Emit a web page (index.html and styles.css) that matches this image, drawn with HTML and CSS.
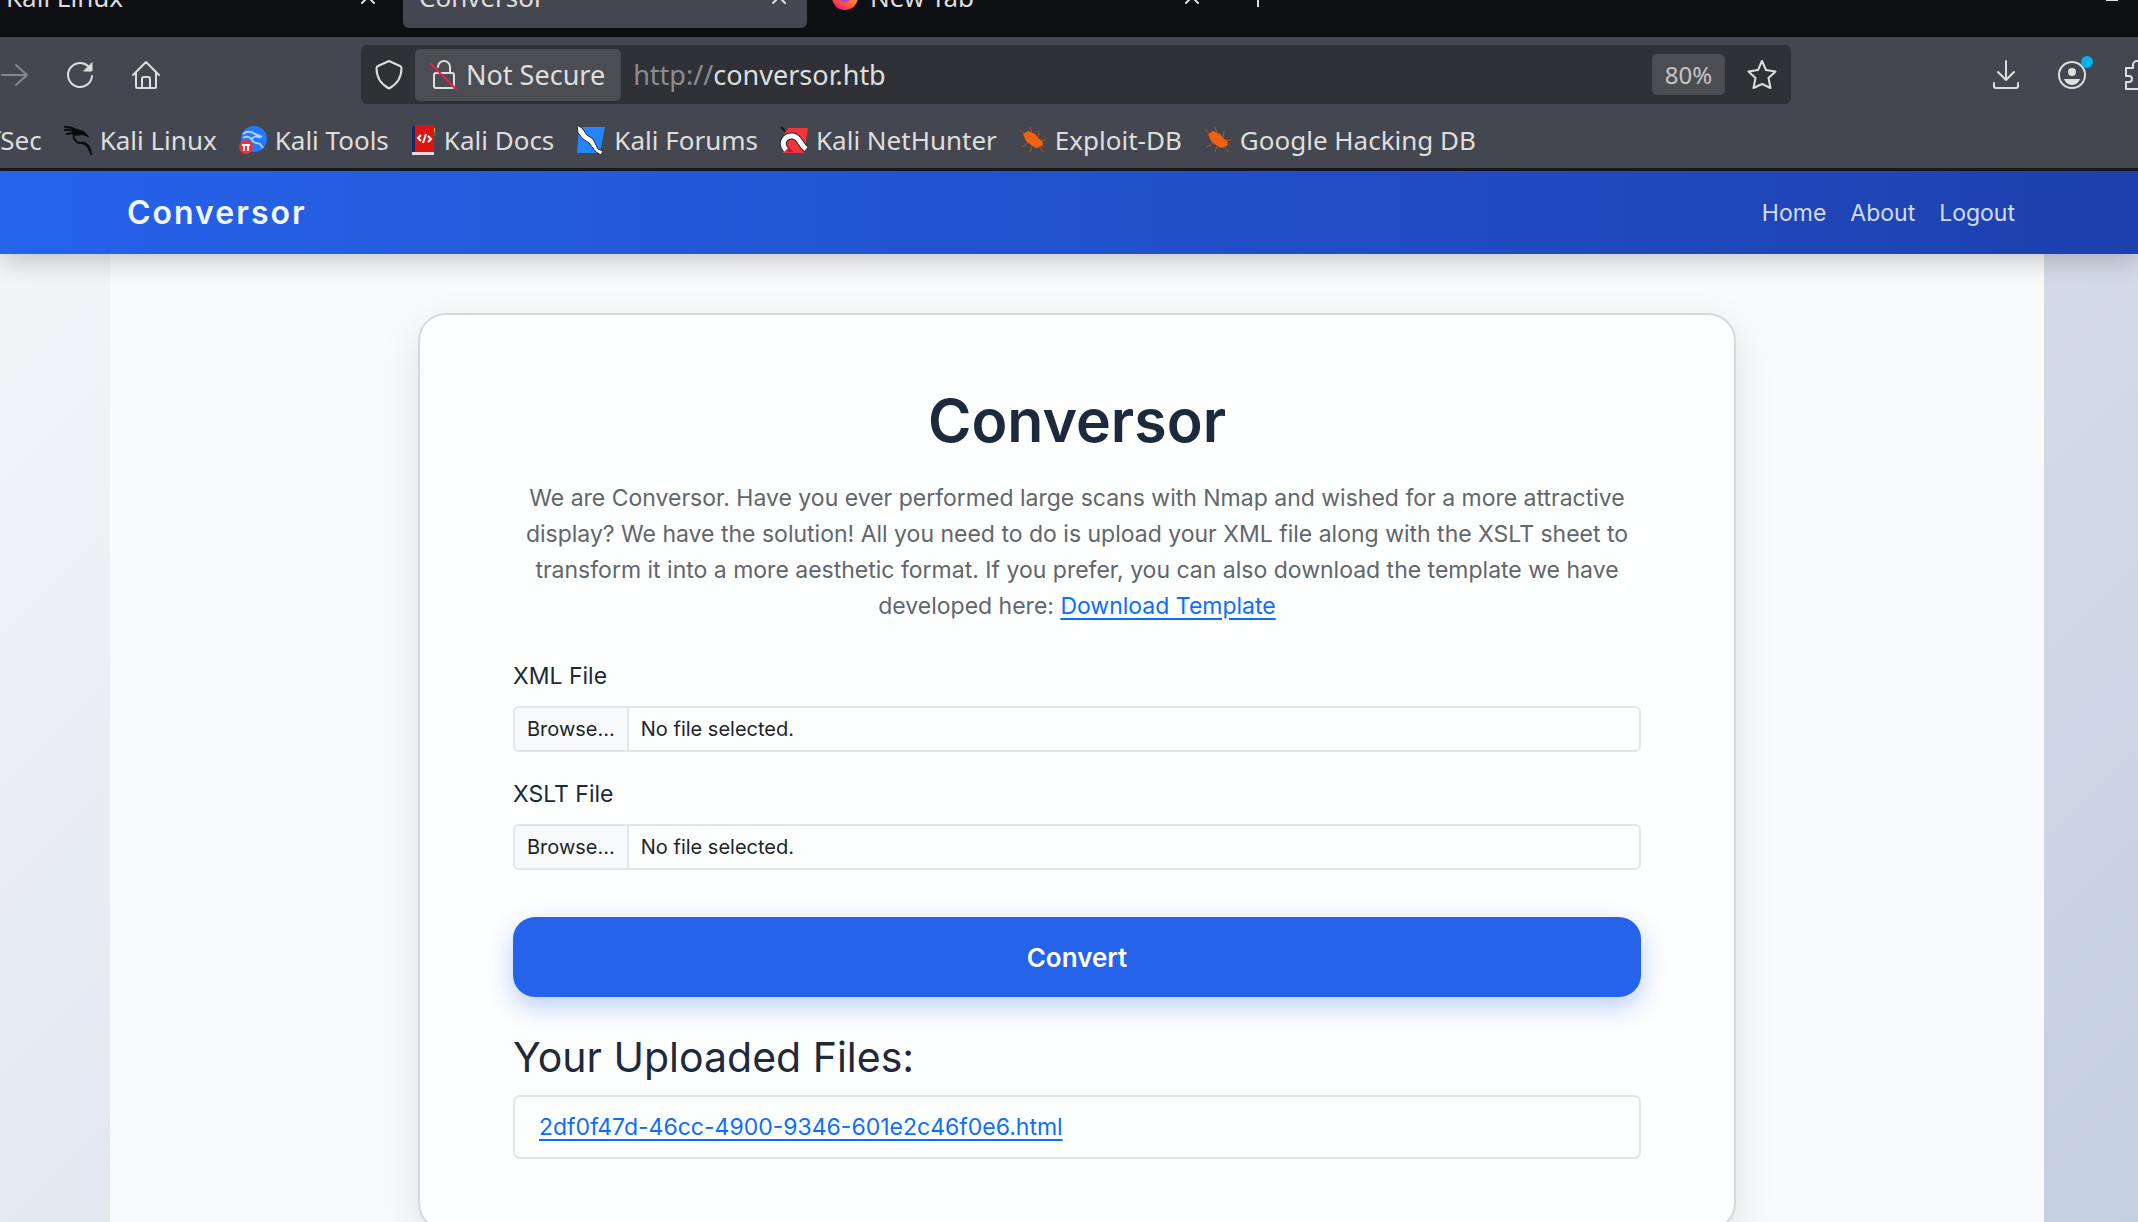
FILE: index.html
```
<!DOCTYPE html>
<html lang="en">
<head>
  <meta charset="UTF-8">
  <meta name="viewport" content="width=device-width, initial-scale=1.0">
  <title>Conversor</title>
  <link rel="stylesheet" href="styles.css">
</head>
<body>

  <!-- browser window -->
  <div class="browser">
    <div class="tabs">
      <div class="tab">
        <span>Kali Linux</span>
        <button class="tab-close" aria-label="Close tab"><svg width="16" height="16" viewBox="0 0 16 16"><path d="M2 2l12 12M14 2L2 14"/></svg></button>
      </div>
      <div class="tab active">
        <span>Conversor</span>
        <button class="tab-close" aria-label="Close tab"><svg width="16" height="16" viewBox="0 0 16 16"><path d="M2 2l12 12M14 2L2 14"/></svg></button>
      </div>
      <div class="tab">
        <svg class="tab-icon" width="26" height="26" viewBox="0 0 26 26">
          <defs>
            <linearGradient id="fox" x1="0.8" y1="0" x2="0.2" y2="1">
              <stop offset="0" stop-color="#ffd23e"/>
              <stop offset="0.55" stop-color="#ff6a3a"/>
              <stop offset="1" stop-color="#f5156c"/>
            </linearGradient>
          </defs>
          <circle cx="13" cy="13" r="13" fill="url(#fox)"/>
          <circle cx="13" cy="12" r="6" fill="#8a4be0"/>
        </svg>
        <span>New Tab</span>
        <button class="tab-close" aria-label="Close tab"><svg width="16" height="16" viewBox="0 0 16 16"><path d="M2 2l12 12M14 2L2 14"/></svg></button>
      </div>
      <button class="new-tab" aria-label="New tab"><svg width="20" height="20" viewBox="0 0 20 20"><path d="M10 0v20M0 10h20"/></svg></button>
      <div class="window-buttons">
        <button aria-label="List all tabs"><svg width="16" height="10" viewBox="0 0 16 10"><path d="M1 0l7 7 7-7"/></svg></button>
        <button aria-label="Minimize"><svg width="12" height="12" viewBox="0 0 12 12"><path d="M0 8h12" stroke-width="4"/></svg></button>
      </div>
    </div>

    <div class="toolbar">
      <button class="forward" aria-label="Forward"><svg width="28" height="28" viewBox="0 0 28 28"><path d="M2 14h25M16 4l11 10-11 10"/></svg></button>
      <button aria-label="Reload"><svg width="28" height="28" viewBox="0 0 28 28"><path d="M22 5A12 12 0 1 0 26 15"/><path d="M26 2v8h-8z" fill="currentColor" stroke-width="1"/></svg></button>
      <button aria-label="Home"><svg width="28" height="30" viewBox="0 0 28 30"><path d="M1 15L14 2l13 13M4 12v15a1 1 0 0 0 1 1h18a1 1 0 0 0 1-1V12M10 28v-9a2 2 0 0 1 2-2h4a2 2 0 0 1 2 2v9"/></svg></button>

      <div class="urlbar">
        <button class="shield" aria-label="Tracking protection"><svg width="28" height="30" viewBox="0 0 28 30"><path d="M14 1l11 5c1 .5 1.500 1 1.500 2 0 9-4 16-12.500 20.500C5.500 24 1.500 17 1.500 8c0-1 .5-1.500 1.500-2z"/></svg></button>
        <button class="not-secure">
          <svg width="28" height="32" viewBox="0 0 28 32"><rect x="4" y="14" width="20" height="15" rx="2"/><path d="M8 8a6 6 0 0 1 12 0v6"/><path d="M1 5l25 25" stroke="#d7264c"/></svg>
          Not Secure
        </button>
        <div class="url"><span>http://</span>conversor.htb</div>
        <button class="zoom">80%</button>
        <button class="star" aria-label="Bookmark this page"><svg width="30" height="30" viewBox="0 0 30 30"><path d="M15 1l4 9 9.500 1.500-7 6.500 2 10L15 24l-8.500 4 2-10-7-6.500L11 10z"/></svg></button>
      </div>

      <div class="toolbar-right">
        <button aria-label="Downloads"><svg width="28" height="30" viewBox="0 0 28 30"><path d="M14 1v19M6 12l8 8 8-8M2 23v3a2 2 0 0 0 2 2h20a2 2 0 0 0 2-2v-3"/></svg></button>
        <button class="account" aria-label="Account"><svg width="30" height="30" viewBox="0 0 30 30"><circle cx="15" cy="15" r="13"/><circle cx="15" cy="12" r="4" fill="currentColor" stroke="none"/><path d="M7 19h16c-1 3-4 6-8 6s-7-3-8-6z" fill="currentColor" stroke="none"/></svg></button>
        <button aria-label="Extensions"><svg width="30" height="32" viewBox="0 0 30 32"><path d="M2 9h7V6a4 4 0 0 1 8 0v3h7v21H2v-7h3a3 3 0 0 0 0-6H2z"/></svg></button>
      </div>
    </div>

    <nav class="bookmarks">
      <a href="#">OffSec</a>
      <a href="#">
        <svg width="28" height="30" viewBox="0 0 28 30"><g fill="none" stroke="#0b0b0d" stroke-linecap="round"><path d="M1 2c4 0 8 0 11 4M1 5c4-1 7 0 10 2M3 9c3-1 5-1 8-1" stroke-width="2"/><path d="M11 6c-3 5-1 12 6 12 6 0 9 3 10 11" stroke-width="2"/></g><path d="M9 2c4 3 8 2 12 5l5 6-7-3-8 1c-4-2-4-6-2-9zM16 17c5-1 9 2 10 6l1 6-5-8z" fill="#0b0b0d"/></svg>
        Kali Linux
      </a>
      <a href="#">
        <svg width="28" height="30" viewBox="0 0 28 30"><circle cx="15" cy="14" r="13" fill="#2777ff"/><path d="M4 9c5-4 9-2 12 0l7 3M4 13c5-3 8 0 9 2 1 3 5 3 8 4l3 4M13 14c1-3 5-3 8-1" fill="none" stroke="#a9d2ff" stroke-width="2"/><circle cx="7" cy="22" r="7" fill="#ee3338"/><path d="M3 20h8M5 20v6M9 20v6" stroke="#fff" stroke-width="2"/></svg>
        Kali Tools
      </a>
      <a href="#">
        <svg width="25" height="30" viewBox="0 0 25 30"><path d="M1 1h3v27H1z" fill="#17295e"/><path d="M4 0h19v27H4z" fill="#dc1414"/><path d="M23 3h1v4h-1z" fill="#e69b26"/><path d="M23 7h1v4h-1z" fill="#3d8a4c"/><path d="M1 27h22v3H1z" fill="#e4dcdc"/><path d="M10 10l-3 3 3 3M17 11l3 3-3 3M15 9l-3 9" fill="none" stroke="#fff" stroke-width="2"/></svg>
        Kali Docs
      </a>
      <a href="#">
        <svg width="30" height="32" viewBox="0 0 30 32"><path d="M3 3h26l-5 26H1z" fill="#2385ff"/><path d="M1 1l5 3 5 7 6 4 5 10 5 2-2 4-5-3-7-9-6-4-5-6z" fill="#fff" stroke="#26262b" stroke-width="1"/></svg>
        Kali Forums
      </a>
      <a href="#">
        <svg width="28" height="30" viewBox="0 0 28 30"><path d="M8 3h20l-4 25H3L1 15z" fill="#f4343b"/><path d="M1 2l4 4" stroke="#111" stroke-width="2"/><path d="M6 25c-6-7-1-15 7-14 7 1 7 9 13 13" fill="none" stroke="#26262b" stroke-width="7"/><path d="M6 25c-6-7-1-15 7-14 7 1 7 9 13 13" fill="none" stroke="#fff" stroke-width="5"/><path d="M7 27l2-6 4 6z" fill="#c01546"/></svg>
        Kali NetHunter
      </a>
      <a href="#">
        <svg width="28" height="30" viewBox="0 0 28 30"><path d="M4 9l5-3 7 3 4 5 3 1 1 5-3 2-4 1-5-3-5-4z" fill="#f0620f"/><path d="M1 5l5 4M11 2l2 6M20 6l-1 7M27 15l-6 1M3 22l6-4M11 27l2-6M24 27l-4-6" stroke="#b85420" stroke-width="1"/></svg>
        Exploit-DB
      </a>
      <a href="#">
        <svg width="28" height="30" viewBox="0 0 28 30"><path d="M4 9l5-3 7 3 4 5 3 1 1 5-3 2-4 1-5-3-5-4z" fill="#f0620f"/><path d="M1 5l5 4M11 2l2 6M20 6l-1 7M27 15l-6 1M3 22l6-4M11 27l2-6M24 27l-4-6" stroke="#b85420" stroke-width="1"/></svg>
        Google Hacking DB
      </a>
    </nav>
  </div>

  <!-- page -->
  <div class="page">
    <header class="navbar">
      <div class="navbar-inner">
        <a class="brand" href="#">Conversor</a>
        <nav class="nav-links">
          <a href="#">Home</a>
          <a href="#">About</a>
          <a href="#">Logout</a>
        </nav>
      </div>
    </header>

    <main class="container">
      <div class="card">
        <h1>Conversor</h1>
        <p class="intro">We are Conversor. Have you ever performed large scans with Nmap and wished for a more attractive display? We have the solution! All you need to do is upload your XML file along with the XSLT sheet to transform it into a more aesthetic format. If you prefer, you can also download the template we have developed here: <a href="#">Download Template</a></p>

        <form>
          <div class="field">
            <label for="xml_file">XML File</label>
            <div class="file-control">
              <span class="file-browse">Browse...</span>
              <span class="file-name">No file selected.</span>
              <input type="file" id="xml_file" name="xml_file">
            </div>
          </div>
          <div class="field">
            <label for="xslt_file">XSLT File</label>
            <div class="file-control">
              <span class="file-browse">Browse...</span>
              <span class="file-name">No file selected.</span>
              <input type="file" id="xslt_file" name="xslt_file">
            </div>
          </div>
          <button class="convert" type="submit">Convert</button>
        </form>

        <h2>Your Uploaded Files:</h2>
        <ul class="files">
          <li><a href="#">2df0f47d-46cc-4900-9346-601e2c46f0e6.html</a></li>
        </ul>
      </div>
    </main>
  </div>

</body>
</html>
```
FILE: styles.css
```
:root {
  --chrome: #44474f;
  --chrome-dark: #0e0f13;
  --chrome-text: #dedede;
  --text: #1e293b;
  --primary: #2563eb;
  --link: #0d6efd;
  --border: #e2e5e9;
}

* {
  box-sizing: border-box;
}

body {
  margin: 0;
  height: 100vh;
  display: flex;
  flex-direction: column;
  overflow: hidden;
  font-family: Inter, "Liberation Sans", sans-serif;
  font-size: 23px;
  color: var(--text);
}

button {
  font: inherit;
  color: inherit;
  background: none;
  border: none;
  padding: 0;
  cursor: pointer;
}

/* browser */
.browser {
  flex: none;
  background: var(--chrome);
  color: var(--chrome-text);
  font-family: "Noto Sans", sans-serif;
  font-size: 26px;
  border-bottom: 3px solid #17181c;
}

.browser svg {
  display: block;
  flex: none;
}

.browser button svg {
  fill: none;
  stroke: currentColor;
  stroke-width: 2;
  stroke-linecap: round;
  stroke-linejoin: round;
}

.tabs {
  display: flex;
  align-items: flex-end;
  height: 37px;
  padding-bottom: 9px;
  overflow: hidden;
  background: var(--chrome-dark);
}

.tab {
  flex: none;
  display: flex;
  align-items: center;
  gap: 12px;
  width: 404px;
  height: 62px;
  padding: 0 20px 0 16px;
  border-radius: 6px;
}

.tab:first-child {
  width: 396px;
  margin-right: 7px;
  padding-left: 6px;
}

.tab.active {
  background: var(--chrome);
  margin-right: 9px;
}

.tab-close {
  margin-left: auto;
}

.new-tab {
  height: 62px;
  margin-left: 28px;
}

.window-buttons {
  display: flex;
  align-items: center;
  gap: 124px;
  height: 62px;
  margin-left: auto;
  padding-right: 20px;
}

.toolbar {
  display: flex;
  align-items: center;
  gap: 38px;
  height: 75px;
}

.toolbar .forward {
  color: #85878c;
}

.urlbar {
  display: flex;
  align-items: center;
  flex: 1;
  height: 59px;
  margin-left: 163px;
  padding: 0 14px;
  border-radius: 6px;
  background: #303136;
  font-size: 27px;
}

.not-secure {
  display: flex;
  align-items: center;
  gap: 8px;
  height: 52px;
  margin-left: 12px;
  padding: 0 16px 0 15px;
  border-radius: 5px;
  background: #4c4d52;
}

.url {
  flex: 1;
  margin-left: 12px;
}

.url span {
  color: #8b8c90;
}

.zoom {
  height: 41px;
  width: 73px;
  margin-right: 22px;
  border-radius: 5px;
  font-size: 24px;
  line-height: 41px;
  color: #c6c6c8;
  background: #4c4d52;
}

.toolbar-right {
  display: flex;
  align-items: center;
  gap: 37px;
  width: 325px;
  justify-content: flex-end;
  margin-right: -16px;
}

.account {
  position: relative;
}

.account::after {
  content: "";
  position: absolute;
  top: -4px;
  right: -6px;
  width: 12px;
  height: 12px;
  border-radius: 50%;
  background: #00b3f4;
}

.bookmarks {
  display: flex;
  align-items: center;
  gap: 22px;
  height: 56px;
  margin-left: -38px;
}

.bookmarks a {
  display: flex;
  align-items: center;
  gap: 8px;
  color: inherit;
  text-decoration: none;
  white-space: nowrap;
}

/* page */
.page {
  flex: 1;
  min-height: 0;
  display: flex;
  flex-direction: column;
  overflow: hidden;
  background: linear-gradient(135deg, #f4f6f9, #c4cfe1);
}

.navbar {
  flex: none;
  position: relative;
  padding: 0 94px 0 110px;
  background: linear-gradient(90deg, var(--primary), #1e40af);
  box-shadow: 0 6px 26px rgba(0, 0, 0, 0.22);
}

.navbar-inner {
  display: flex;
  align-items: center;
  justify-content: space-between;
  height: 83px;
  padding: 0 29px 0 17px;
}

.brand {
  font-size: 32px;
  font-weight: 600;
  letter-spacing: 2px;
  color: #f1f5fe;
  text-decoration: none;
}

.nav-links {
  display: flex;
  gap: 24px;
}

.nav-links a {
  color: #d3dcf5;
  text-decoration: none;
}

.container {
  flex: 1 0 auto;
  margin: 0 94px 0 110px;
  padding: 59px 16px;
  background: #f9fafc;
}

.card {
  max-width: 1318px;
  margin: 0 auto;
  padding: 66px 93px 70px;
  border: 2px solid #d5d8de;
  border-radius: 28px;
  background: #fdfefe;
  box-shadow: 0 14px 40px rgba(0, 0, 0, 0.1);
}

h1 {
  margin: 0 0 19px;
  font-size: 59px;
  line-height: 80px;
  font-weight: 600;
  text-align: center;
}

.intro {
  margin: 0 0 35px;
  line-height: 36px;
  color: #61666c;
  text-align: center;
}

.card a {
  color: var(--link);
  text-underline-offset: 4px;
}

.field {
  margin-bottom: 25px;
}

.field label {
  display: block;
  margin-bottom: 13px;
  line-height: 34px;
}

.file-control {
  position: relative;
  display: flex;
  height: 46px;
  border: 2px solid var(--border);
  border-radius: 6px;
  font-size: 20px;
  line-height: 42px;
  color: #212529;
  overflow: hidden;
}

.file-browse {
  padding: 0 12px;
  border-right: 2px solid var(--border);
  background: #f8f9fb;
}

.file-name {
  padding: 0 12px;
}

/* native input covers the drawn control */
.file-control input {
  position: absolute;
  inset: 0;
  width: 100%;
  opacity: 0;
  cursor: pointer;
}

.convert {
  display: block;
  width: 100%;
  height: 80px;
  margin-top: 47px;
  border-radius: 22px;
  background: var(--primary);
  color: #fff;
  font-size: 26px;
  font-weight: 600;
  box-shadow: 0 10px 26px rgba(37, 99, 235, 0.3);
}

h2 {
  margin: 33px 0 11px;
  font-size: 41px;
  line-height: 54px;
  font-weight: 400;
}

.files {
  margin: 0;
  padding: 0;
  list-style: none;
  border: 2px solid var(--border);
  border-radius: 7px;
}

.files li {
  padding: 12px 24px;
  line-height: 36px;
}
```
